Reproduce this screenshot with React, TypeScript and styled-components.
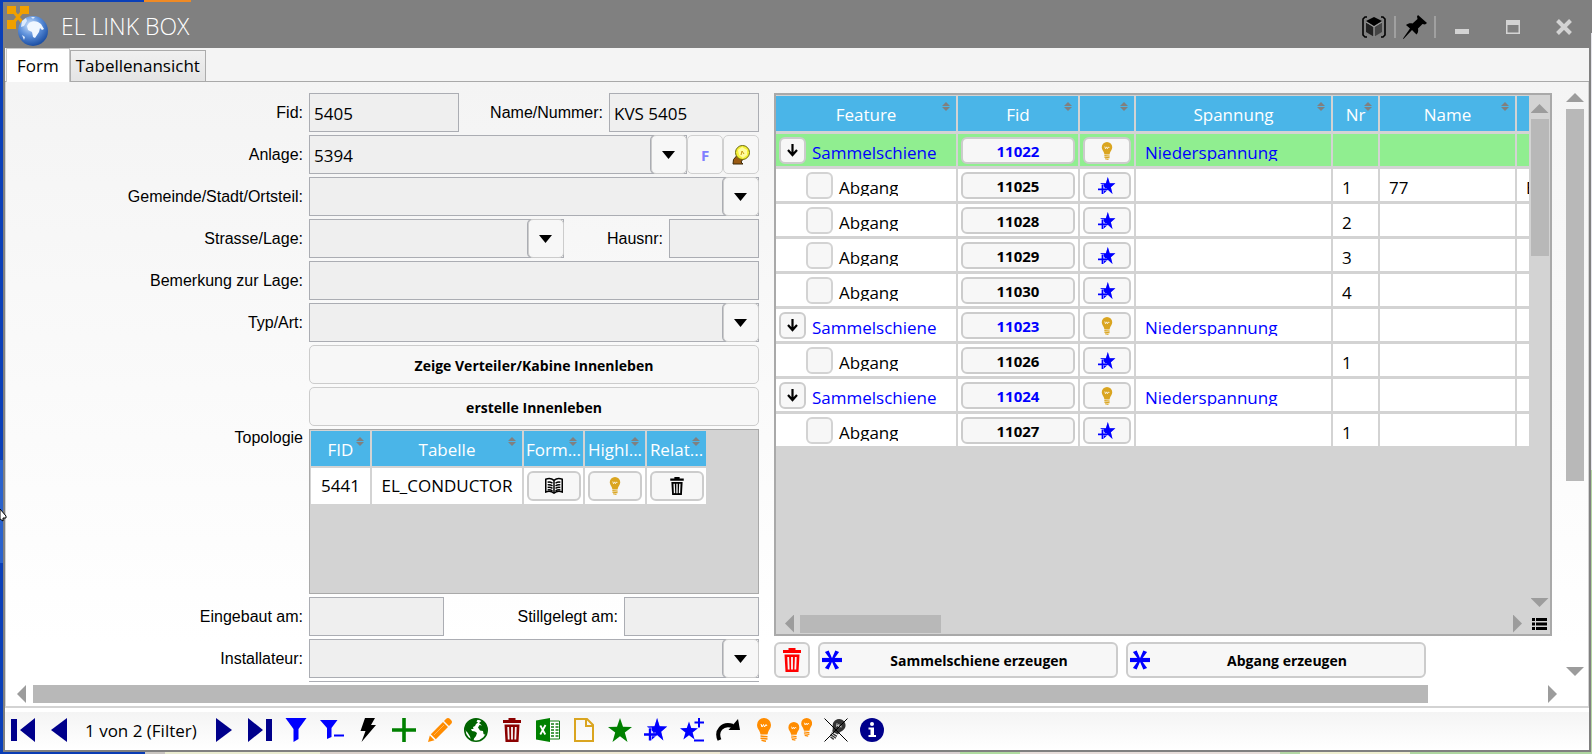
import React from 'react';
import styled, { createGlobalStyle } from 'styled-components';

const UI_FONT = '"Open Sans", "Noto Sans", sans-serif';
const LABEL_FONT = '"Liberation Sans", Arial, sans-serif';

const GlobalStyle = createGlobalStyle`
  *, *::before, *::after { box-sizing: border-box; }
  body { margin: 0; font-family: ${UI_FONT}; font-size: 17px; color: #000; }
  button, input, select { font: inherit; color: inherit; margin: 0; }
  button { padding: 0; cursor: pointer; }
`;

/* ---------- desktop and window ---------- */

const Desktop = styled.div`
  position: relative;
  display: flex;
  height: 100vh;
  min-height: 480px;
  padding: 2px 1px 2px 3px;
  background:
    linear-gradient(90deg, #0a3fb8 0 144px, #f08a24 144px 191px, #808080 191px) top / 100% 2px no-repeat,
    linear-gradient(90deg, #0a3db5 0 145px, #c9c5c0 145px 165px, #e9ebcf 165px 320px, #d9cfc9 320px 560px, #eee8d2 560px 720px, #d8cfd0 720px 960px, #b0dca0 960px 1020px, #e6dcd9 1020px 1280px, #b3d8a4 1280px 1300px, #eeeecf 1300px 1410px, #aed6a0 1410px) bottom / 100% 2px no-repeat,
    linear-gradient(#808080 0 33px, #e4e4ea 33px 470px, #b5d6a4 470px) right / 1px 100% no-repeat,
    linear-gradient(#0a3fb8 0 460px, #2a62cc 460px 563px, #0a3fb8 563px) left / 3px 100% no-repeat;
`;

const Cursor = styled.svg`
  position: absolute;
  left: 0;
  top: 509px;
`;

const Window = styled.main`
  flex: 1;
  min-width: 0;
  display: flex;
  flex-direction: column;
  border: 2px solid #808080;
  background: #fff;
`;

const TitleBar = styled.header`
  flex: none;
  display: flex;
  align-items: center;
  height: 44px;
  background: #808080;
`;

const Title = styled.h1`
  flex: 1;
  margin: 0 0 0 7px;
  color: #fff;
  font-size: 23px;
  font-weight: 300;
  line-height: 44px;
`;

const TitleButton = styled.button<{ $width: number }>`
  display: flex;
  align-items: center;
  justify-content: center;
  width: ${(p) => p.$width}px;
  height: 44px;
  padding-top: 2px;
  border: 0;
  background: none;
`;

const TitleRule = styled.span`
  width: 2px;
  height: 22px;
  margin-top: 2px;
  background: #a0a0a0;
`;

/* ---------- tabs ---------- */

const TabBar = styled.div`
  flex: none;
  display: flex;
  align-items: flex-end;
  height: 34px;
  padding-left: 1px;
  border-bottom: 1px solid #a9a9a9;
  background: #f4f4f4;
`;

const Tab = styled.button<{ $active?: boolean }>`
  height: ${(p) => (p.$active ? 34 : 31)}px;
  margin-bottom: ${(p) => (p.$active ? -1 : 0)}px;
  padding: 0 ${(p) => (p.$active ? 10 : 5)}px;
  border: 1px solid ${(p) => (p.$active ? '#c8c8c8' : '#acacac')};
  border-bottom: 0;
  background: ${(p) => (p.$active ? '#fff' : 'linear-gradient(#f0f0f0, #e4e4e4)')};
  line-height: 24px;
`;

/* ---------- scroll area ---------- */

const FormArea = styled.section`
  flex: 1;
  min-height: 0;
  display: grid;
  grid-template: minmax(0, 1fr) 24px / minmax(0, 1fr) 26px;
  padding: 1px 0 0 1px;
  border: 1px solid #d3d3d3;
  border-width: 0 1px 2px;
  background: linear-gradient(#f4f4f4, #fff 90%);
`;

const Viewport = styled.div`
  display: grid;
  grid-template-columns: 296px minmax(360px, 450px) minmax(0, 1fr);
  grid-template-rows: minmax(0, 1fr);
  column-gap: 6px;
  padding-top: 10px;
  overflow: hidden;
`;

const VScroll = styled.div<{ $top: number; $bottom: number }>`
  display: flex;
  flex-direction: column;
  align-items: center;
  min-height: 0;
  padding: ${(p) => p.$top}px 0 ${(p) => p.$bottom}px;
`;

const HScroll = styled.div<{ $left: number; $right: number }>`
  display: flex;
  align-items: center;
  min-width: 0;
  padding: 0 ${(p) => p.$right}px 0 ${(p) => p.$left}px;
`;

const Track = styled.div<{ $vertical?: boolean; $gap: number }>`
  display: flex;
  flex-direction: ${(p) => (p.$vertical ? 'column' : 'row')};
  flex: 1;
  min-width: 0;
  min-height: 0;
  margin: ${(p) => (p.$vertical ? `${p.$gap}px 0` : `0 ${p.$gap}px`)};
`;

const Thumb = styled.div<{ $share: string }>`
  flex: 0 0 ${(p) => p.$share};
  min-width: 18px;
  min-height: 18px;
  background: #b8b8b8;
`;

const ScrollArrow = styled.button<{ $dir: 'up' | 'down' | 'left' | 'right' }>`
  flex: none;
  width: ${(p) => (p.$dir === 'up' || p.$dir === 'down' ? 18 : 9)}px;
  height: ${(p) => (p.$dir === 'up' || p.$dir === 'down' ? 9 : 18)}px;
  border: 0;
  background: #9c9c9c;
  clip-path: polygon(${(p) =>
    ({
      up: '50% 0, 100% 100%, 0 100%',
      down: '0 0, 100% 0, 50% 100%',
      left: '0 50%, 100% 0, 100% 100%',
      right: '0 0, 100% 50%, 0 100%',
    })[p.$dir]});
`;

/* ---------- form ---------- */

const FormGrid = styled.form`
  grid-column: 1 / 3;
  align-self: start;
  display: grid;
  grid-template-columns: 296px minmax(0, 1fr);
  grid-auto-rows: max-content;
  gap: 3px 6px;
`;

const Label = styled.label<{ $top?: boolean }>`
  align-self: ${(p) => (p.$top ? 'start' : 'center')};
  text-align: right;
  white-space: nowrap;
  font-family: ${LABEL_FONT};
  font-size: 16px;
  line-height: 18px;
`;

const FieldRow = styled.div`
  display: flex;
  grid-column: 2;
  height: 39px;
`;

const Inline = styled.div`
  flex: 1;
  display: flex;
  align-items: center;
  justify-content: flex-end;
  padding-right: 6px;
`;

const TextBox = styled.input<{ $width?: number }>`
  flex: ${(p) => (p.$width ? `0 0 ${p.$width}px` : '1')};
  min-width: 0;
  height: 39px;
  padding: 2px 4px 0;
  border: 1px solid #abadb3;
  border-radius: 0;
  background: #efefef;
  outline-offset: -1px;
`;

const Combo = styled.div<{ $width?: number }>`
  position: relative;
  flex: ${(p) => (p.$width ? `0 0 ${p.$width}px` : '1')};
  min-width: 0;
`;

const Select = styled.select`
  appearance: none;
  width: 100%;
  height: 39px;
  padding: 2px 40px 0 4px;
  border: 1px solid #abadb3;
  border-radius: 0;
  background: #efefef;
`;

const ComboArrow = styled.span`
  position: absolute;
  top: 0;
  right: 0;
  display: flex;
  align-items: center;
  justify-content: center;
  width: 36px;
  height: 39px;
  padding-right: 2px;
  border: 1px solid #ccc;
  border-radius: 5px;
  background: #f7f7f7;
  box-shadow: -1px 0 0 #abadb3;
  pointer-events: none;
`;

const SquareButton = styled.button`
  flex: 0 0 36px;
  display: flex;
  align-items: center;
  justify-content: center;
  height: 39px;
  border: 1px solid #d0d0d0;
  border-radius: 5px;
  background: #f7f7f7;
  color: #8080ff;
  font-size: 15px;
  font-weight: 700;
`;

const WideButton = styled.button`
  grid-column: 2;
  height: 39px;
  padding-top: 1px;
  border: 1px solid #ccc;
  border-radius: 5px;
  background: #f7f7f7;
  font-size: 14px;
  font-weight: 700;
`;

/* ---------- tables ---------- */

const TopologyBox = styled.div`
  grid-column: 2;
  height: 165px;
  padding: 1px;
  border: 1px solid #a9a9a9;
  background: #d3d3d3;
  overflow: hidden;
`;

const Table = styled.table<{ $width: number }>`
  width: ${(p) => p.$width}px;
  table-layout: fixed;
  border-collapse: separate;
  border-spacing: 0;
`;

const Th = styled.th<{ $line: number }>`
  position: relative;
  height: ${(p) => 35 + p.$line}px;
  padding: 2px 0 0;
  border-right: 2px solid #d3d3d3;
  border-bottom: ${(p) => p.$line}px solid #d3d3d3;
  background: #4ab5e8;
  color: #fff;
  font-weight: 400;
  line-height: 24px;
  white-space: nowrap;
`;

const SortMark = styled.svg`
  position: absolute;
  top: 6px;
  right: 6px;
`;

const TopoCell = styled.td`
  height: 36px;
  padding: 0;
  border-right: 2px solid #d3d3d3;
  background: #fff;
  text-align: center;
  line-height: 24px;
`;

const CellButton = styled.button<{ $width: number; $height: number; $tint?: string }>`
  flex: none;
  display: flex;
  align-items: center;
  justify-content: center;
  width: ${(p) => p.$width}px;
  height: ${(p) => p.$height}px;
  margin: 0 auto;
  border: 2px solid #ccc;
  border-radius: 6px;
  background: #f7f7f7;
  color: ${(p) => p.$tint ?? '#000'};
  font-size: 15px;
  font-weight: 700;
  line-height: 20px;
`;

const RightColumn = styled.section`
  display: flex;
  flex-direction: column;
  min-width: 0;
  min-height: 0;
  padding: 0 10px 4px 9px;
`;

const FeatureGrid = styled.div`
  flex: 1;
  min-height: 0;
  display: grid;
  grid-template: minmax(0, 1fr) 21px / minmax(0, 1fr) 21px;
  border: 2px solid #a9a9a9;
  background: #d3d3d3;
`;

const TableClip = styled.div`
  padding-top: 1px;
  overflow: hidden;
`;

const Td = styled.td<{ $selected?: boolean; $tint?: string }>`
  height: 35px;
  padding: 0;
  border-right: 2px solid #d3d3d3;
  border-bottom: 3px solid #d3d3d3;
  background: ${(p) => (p.$selected ? '#90ee90' : '#fff')};
  color: ${(p) => p.$tint ?? '#000'};
  vertical-align: top;
`;

const CellText = styled.div<{ $pad: number; $clip?: boolean }>`
  height: ${(p) => (p.$clip ? 27 : 32)}px;
  padding-left: ${(p) => p.$pad}px;
  line-height: 37px;
  white-space: nowrap;
  overflow: ${(p) => (p.$clip ? 'hidden' : 'visible')};
`;

const CellBody = styled.div<{ $indent?: boolean }>`
  display: flex;
  align-items: flex-start;
  height: 32px;
  padding: 0 3px 0 ${(p) => (p.$indent ? 30 : 3)}px;
`;

const ButtonSlot = styled.div`
  flex: none;
  display: flex;
  padding-top: 3px;
`;

const RowCheck = styled.input`
  appearance: none;
  width: 27px;
  height: 27px;
  border: 2px solid #d3d3d3;
  border-radius: 6px;
  background: #f7f7f7;
`;

const Corner = styled.button`
  display: flex;
  align-items: center;
  justify-content: center;
  border: 0;
  background: none;
`;

const Actions = styled.div`
  flex: none;
  display: flex;
  gap: 8px;
  margin-top: 6px;
`;

const ActionButton = styled.button<{ $wide?: boolean }>`
  display: grid;
  grid-template-columns: ${(p) => (p.$wide ? '22px 1fr' : '1fr')};
  align-items: center;
  justify-items: center;
  flex: 0 1 ${(p) => (p.$wide ? 300 : 36)}px;
  height: 36px;
  padding: 0 1px;
  border: 2px solid #ccc;
  border-radius: 6px;
  background: #f7f7f7;
  font-size: 14px;
  font-weight: 700;
`;

/* ---------- bottom toolbar ---------- */

const Toolbar = styled.footer`
  flex: none;
  display: flex;
  align-items: center;
  height: 42px;
  padding-bottom: 2px;
  border-top: 4px solid #fff;
  background: linear-gradient(#f4f4f4, #fff);
`;

const ToolButton = styled.button`
  flex: none;
  display: flex;
  align-items: center;
  justify-content: center;
  width: 36px;
  height: 36px;
  border: 0;
  background: none;
`;

const Position = styled.output`
  flex: 0 0 129px;
  padding-left: 8px;
  white-space: nowrap;
`;

/* ---------- icons ---------- */

const Svg = ({ size = 24, children }: { size?: number; children: React.ReactNode }) => (
  <svg width={size} height={size} viewBox="0 0 24 24" aria-hidden="true">
    {children}
  </svg>
);

const BulbShape = ({ color, gap = '#fff' }: { color: string; gap?: string }) => (
  <g>
    <path d="M12 0a7 7 0 0 0-7 7c0 3.200 2.200 4.800 3 7.400.300 1 .300 1.600.600 2.100h6.800c.300-.500.300-1.100.600-2.100.800-2.600 3-4.200 3-7.400a7 7 0 0 0-7-7z" fill={color} />
    <path d="M9 6l1 3 1.500-2.500L12.500 9 14 6.500l1 1.500" fill="none" stroke={gap} strokeWidth="1" />
    <path d="M8.500 18l7 .8M8.500 20.200l7 .8M9.500 22.300l4.500.9" stroke={color} strokeWidth="1.500" />
  </g>
);

const Bulb = ({ color, size = 24 }: { color: string; size?: number }) => (
  <Svg size={size}>
    <BulbShape color={color} />
  </Svg>
);

const TwoBulbs = () => (
  <Svg>
    <g transform="translate(-3.500 4) scale(.78)"><BulbShape color="#ff8c00" /></g>
    <g transform="translate(9.300 0) scale(.78)"><BulbShape color="#ff8c00" /></g>
  </Svg>
);

const BulbOff = () => (
  <Svg>
    <g transform="rotate(28 12 12) translate(1.500 0) scale(.92)"><BulbShape color="#333" gap="#ccc" /></g>
    <path d="M.5.5l23 23M23.500.5l-23 23" stroke="#000" strokeWidth="1" />
  </Svg>
);

const Trash = ({ color, size = 24 }: { color: string; size?: number }) => (
  <Svg size={size}>
    <path d="M8.500 0h7v2h5.500v3H3V2h5.500z M4.500 6.500h15L18.500 24h-13z" fill={color} />
    <path d="M8.200 9l.5 12.500M12 9v12.500M15.800 9l-.5 12.500" stroke="#f7f7f7" strokeWidth="1.800" />
  </Svg>
);

const STAR = 'M12 0l3 8.800 9 .2-7.200 5.500L19.500 24 12 18.200 4.500 24l2.700-9.500L0 9l9-.2z';

const Star = () => (
  <Svg><path d={STAR} fill="#008000" /></Svg>
);

const StarPlus = ({ size = 24 }: { size?: number }) => (
  <Svg size={size}>
    <path d={STAR} fill="#00f" transform="translate(3 0) scale(.84 .94)" />
    <path d="M6 9.500v13M0 16.500h12" stroke="#fff" strokeWidth="4" />
    <path d={STAR} fill="#00f" transform="translate(3 0) scale(.84 .94)" opacity=".45" />
    <path d="M6 10.500v12M0 16.500h12" stroke="#00f" strokeWidth="2.400" />
  </Svg>
);

const StarPlusMinus = () => (
  <Svg>
    <path d={STAR} fill="#00f" transform="translate(0 3.500) scale(.75)" />
    <path d="M19 0v9.500M14.500 4.500h9.500M14 22.500h10" stroke="#00f" strokeWidth="2" />
  </Svg>
);

const Book = () => (
  <Svg size={18}>
    <path d="M1 3c4-1.500 8-1 11 1.500C15 2 19 1.500 23 3v17c-4-1.500-8-.8-11 1.500C9 19.200 5 18.500 1 20z" fill="#fff" stroke="#000" strokeWidth="2" />
    <path d="M12 5v16M3.500 7c2.500-.6 4.500 0 6.500 1.200M3.500 10.500c2.500-.6 4.500 0 6.500 1.200M3.500 14c2.500-.6 4.500 0 6.500 1.200M3.500 17.200c2.500-.6 4.500 0 6.500 1.200M20.500 7c-2.500-.6-4.500 0-6.500 1.200M20.500 10.500c-2.500-.6-4.500 0-6.500 1.200M20.500 14c-2.500-.6-4.500 0-6.500 1.200M20.500 17.200c-2.500-.6-4.500 0-6.500 1.200" fill="none" stroke="#000" strokeWidth="2" />
  </Svg>
);

const Asterisk = () => (
  <Svg size={20}>
    <path d="M0 9.500h24v5H0z" fill="#00f" />
    <path d="M10.500 12L3.500 2.500 8 .5 12 10 16 .5l4.500 2L13.500 12l7 9.500-4.500 2L12 14 8 23.500l-4.500-2z" fill="#00f" />
  </Svg>
);

const DownArrow = () => (
  <svg width="11" height="13" viewBox="0 0 11 13" aria-hidden="true">
    <path d="M5.500 0v11M1 6l4.500 5L10 6" fill="none" stroke="#000" strokeWidth="2.200" />
  </svg>
);

const Caret = () => (
  <svg width="13" height="8" viewBox="0 0 13 8" aria-hidden="true"><path d="M0 0h13L6.500 8z" /></svg>
);

const GoldBulb = () => (
  <svg width="20" height="20" viewBox="0 0 20 20" aria-hidden="true">
    <path d="M8 12l4 2-2 3 2 2H2l.5-4.500L5.500 11z" fill="#9a5a12" stroke="#3c2806" strokeWidth="1" />
    <circle cx="11.500" cy="7.500" r="7" fill="#f6f238" stroke="#6b680c" strokeWidth="1" />
    <path d="M7 5l4-3 5 3 0 5-4 3-4-3z" fill="#fffca0" />
    <path d="M10 10l1-4 2 3" fill="none" stroke="#c89a10" strokeWidth="1" />
  </svg>
);

const AppLogo = () => (
  <svg width="49" height="44" viewBox="0 0 49 44" aria-hidden="true">
    <defs>
      <radialGradient id="globe" cx=".4" cy=".3" r=".7">
        <stop offset="0" stopColor="#cfe3fb" />
        <stop offset=".5" stopColor="#5f92dc" />
        <stop offset="1" stopColor="#1c4fa4" />
      </radialGradient>
    </defs>
    <path d="M2 2h9v8H2z M15 2h9v8h-9z M2 16h9v9H2z M15 16h9v9h-9z" fill="#f0a000" />
    <path d="M9 8l8 10M17 8L9 18" stroke="#f0a000" strokeWidth="3" />
    <circle cx="28" cy="27" r="15" fill="url(#globe)" />
    <path d="M24 19c4-3 9-2 12 1l3 5-2 1-2-2-1 4-4 6-2-1-1-5-4-2-1-4z" fill="#f0f7ff" />
    <path d="M17 17l4-3 1 3-3 5-3 1z M17 31l3 2-1 3z M26 13l4 0-2 2z" fill="#dceafc" />
  </svg>
);

const CubeIcon = () => (
  <svg width="24" height="22" viewBox="0 0 24 22" aria-hidden="true">
    <path d="M5 1H3L1 3v16l2 2h2M19 1h2l2 2v16l-2 2h-2" fill="none" stroke="#000" strokeWidth="1.600" />
    <path d="M12 1l8 4-8 5-8-5z" fill="#000" />
    <path d="M4 6.500l7.500 4.500v9.500L4 16z" fill="#222" />
    <path d="M20 6.500L12.500 11v9.500L20 16z" fill="#444" />
    <path d="M4 6l8 4.800L20 6M12 11v10" fill="none" stroke="#999" strokeWidth="1" />
  </svg>
);

const PinIcon = () => (
  <svg width="24" height="24" viewBox="0 0 24 24" aria-hidden="true">
    <path d="M15 0l9 8-2 1.500-2.500-.5-4.500 4.500c.5 2.500 0 4.500-1.500 6L9 15 .5 24 0 23.500 7 13.500 3 10c2-1.500 4-2 6.500-1.500L14.500 4 14 1.500z" />
  </svg>
);

const Polygon = ({ d, color }: { d: string; color: string }) => (
  <Svg><path d={d} fill={color} /></Svg>
);

const Globe = () => (
  <Svg>
    <circle cx="12" cy="12" r="11.200" fill="#fff" stroke="#006400" strokeWidth="1.600" />
    <path d="M5 3.500C8 1 11 .5 14 1l-1.500 2.500 1.500 1L12 6l-1 2-2 1 .5 2-2.500 0 1 2 3 .5 2 1.500-1 3-2 2.500-.5 2.500-2.500-.500-1-4-2.500-4L1 12C1 8.500 2.500 5.500 5 3.500z M15 5l3-2.500c3 1.500 5 5 5 9.500l-1.500 5-2-1-.5-3-3-.5-2-3 1.500-2.500 2.500.500z" fill="#006400" />
  </Svg>
);

const Excel = () => (
  <Svg>
    <path d="M13 3h10.500v18H13" fill="#fff" stroke="#107c10" strokeWidth="1" />
    <path d="M15 6h3M19.500 6h3M15 9h3M19.500 9h3M15 12h3M19.500 12h3M15 15h3M19.500 15h3M15 18h3M19.500 18h3" stroke="#107c10" strokeWidth="1.500" />
    <path d="M0 2.500L14 0v24L0 21.500z" fill="#008000" />
    <path d="M4.300 7.500l5 9M9.500 7l-5.200 9.500" stroke="#fff" strokeWidth="1.800" />
  </Svg>
);

const Pencil = () => (
  <Svg>
    <path d="M0 24l1.800-6.500 4.700 4.700z M2.800 16.200L15 4l5 5L7.800 21.200z M16 3l2.200-2.200c1-1 2.600-1 3.600 0l1.400 1.400c1 1 1 2.600 0 3.600L21 8z" fill="#ff8c00" />
    <path d="M6 17L16 7" stroke="#ffb45c" strokeWidth="1" />
  </Svg>
);

const Page = () => (
  <Svg>
    <path d="M3 1h12l6 6v16H3z M14 1v7h7" fill="none" stroke="#daa520" strokeWidth="2" />
  </Svg>
);

const Redo = () => (
  <Svg>
    <path d="M3.500 22C-.5 13 6 4.500 17 8" fill="none" stroke="#000" strokeWidth="4" />
    <path d="M22 1l2 11-11.500 0z" />
  </Svg>
);

const Info = () => (
  <Svg>
    <circle cx="12" cy="12" r="12" fill="#00008b" />
    <circle cx="12" cy="6" r="2" fill="#fff" />
    <path d="M8.500 9.500H14V17h2v2H8.500v-2h2v-5.500h-2z" fill="#fff" />
  </Svg>
);

const Sort = () => (
  <SortMark width="8" height="9" viewBox="0 0 8 9" aria-hidden="true">
    <path d="M4 0l4 4H0z M0 5h8L4 9z" fill="#808080" />
  </SortMark>
);

/* ---------- data ---------- */

type Row = { kind: 'rail' | 'branch'; fid: string; nr?: string; name?: string; more?: string };

const ROWS: Row[] = [
  { kind: 'rail', fid: '11022' },
  { kind: 'branch', fid: '11025', nr: '1', name: '77', more: 'E' },
  { kind: 'branch', fid: '11028', nr: '2' },
  { kind: 'branch', fid: '11029', nr: '3' },
  { kind: 'branch', fid: '11030', nr: '4' },
  { kind: 'rail', fid: '11023' },
  { kind: 'branch', fid: '11026', nr: '1' },
  { kind: 'rail', fid: '11024' },
  { kind: 'branch', fid: '11027', nr: '1' },
];

const COLUMNS: [string, number][] = [
  ['Feature', 182],
  ['Fid', 122],
  ['', 56],
  ['Spannung', 197],
  ['Nr', 47],
  ['Name', 137],
  ['', 137],
];

const TOPO_COLUMNS: [string, number][] = [
  ['FID', 61],
  ['Tabelle', 152],
  ['Form...', 61],
  ['Highl...', 62],
  ['Relat...', 61],
];

const TOOLS: [string, React.ReactNode][] = [
  ['Nächster', <Polygon d="M4 0l16 12L4 24z" color="#00008b" />],
  ['Letzter', <Polygon d="M0 0l15 12L0 24z M18 1h6v22h-6z" color="#00008b" />],
  ['Filter', <Polygon d="M1.500 0h21L14.500 11v10L9.500 24V11z" color="#00f" />],
  ['Filter entfernen', <Polygon d="M0 2h17.500L11.500 10v9L7 21V10z M14 16.500h10v2H14z" color="#00f" />],
  ['Ausführen', <Polygon d="M9 0h10l-4 7h5L5.500 24 9.500 13H4.500z" color="#000" />],
  ['Neu', <Polygon d="M10.200 0h3.600v10.200H24v3.600H13.800V24h-3.600V13.800H0v-3.600h10.200z" color="#008000" />],
  ['Bearbeiten', <Pencil />],
  ['Karte', <Globe />],
  ['Löschen', <Trash color="#8b0000" />],
  ['Excel', <Excel />],
  ['Bericht', <Page />],
  ['Favorit', <Star />],
  ['Auswahl hinzufügen', <StarPlus />],
  ['Auswahl ändern', <StarPlusMinus />],
  ['Weiter', <Redo />],
  ['Hervorheben', <Bulb color="#ff8c00" />],
  ['Alle hervorheben', <TwoBulbs />],
  ['Hervorhebung aus', <BulbOff />],
  ['Info', <Info />],
];

/* ---------- composed parts ---------- */

const ComboField = ({ id, value = '', width }: { id: string; value?: string; width?: number }) => (
  <Combo $width={width}>
    <Select id={id} defaultValue={value}>
      <option value={value}>{value}</option>
    </Select>
    <ComboArrow><Caret /></ComboArrow>
  </Combo>
);

const HeaderRow = ({ columns, line }: { columns: [string, number][]; line: number }) => (
  <thead>
    <tr>
      {columns.map(([text], i) => (
        <Th key={i} $line={line}>
          {text}
          <Sort />
        </Th>
      ))}
    </tr>
  </thead>
);

const Cols = ({ columns }: { columns: [string, number][] }) => (
  <colgroup>
    {columns.map(([, width], i) => (
      <col key={i} width={width} />
    ))}
  </colgroup>
);

const FeatureRow = ({ row, selected }: { row: Row; selected: boolean }) => {
  const rail = row.kind === 'rail';
  const tint = rail ? '#0000ff' : '#000';
  const cell = { $selected: selected, $tint: tint };
  return (
    <tr>
      <Td {...cell}>
        <CellBody $indent={!rail}>
          <ButtonSlot>
            {rail ? (
              <CellButton type="button" aria-label="Zuklappen" $width={27} $height={27}><DownArrow /></CellButton>
            ) : (
              <RowCheck type="checkbox" aria-label={row.fid} />
            )}
          </ButtonSlot>
          <CellText $pad={6} $clip>{rail ? 'Sammelschiene' : 'Abgang'}</CellText>
        </CellBody>
      </Td>
      <Td {...cell}>
        <ButtonSlot>
          <CellButton type="button" $width={114} $height={27} $tint={tint}>{row.fid}</CellButton>
        </ButtonSlot>
      </Td>
      <Td {...cell}>
        <ButtonSlot>
          <CellButton type="button" aria-label="Markieren" $width={48} $height={27}>
            {rail ? <Bulb color="#daa520" size={18} /> : <StarPlus size={18} />}
          </CellButton>
        </ButtonSlot>
      </Td>
      <Td {...cell}><CellText $pad={9} $clip>{rail ? 'Niederspannung' : ''}</CellText></Td>
      <Td {...cell}><CellText $pad={9}>{row.nr}</CellText></Td>
      <Td {...cell}><CellText $pad={9}>{row.name}</CellText></Td>
      <Td {...cell}><CellText $pad={9}>{row.more}</CellText></Td>
    </tr>
  );
};

const LinkBoxForm = () => (
  <FormGrid onSubmit={(e) => e.preventDefault()}>
    <Label htmlFor="fid">Fid:</Label>
    <FieldRow>
      <TextBox id="fid" $width={150} defaultValue="5405" />
      <Inline><Label htmlFor="name">Name/Nummer:</Label></Inline>
      <TextBox id="name" $width={150} defaultValue="KVS 5405" />
    </FieldRow>

    <Label htmlFor="anlage">Anlage:</Label>
    <FieldRow>
      <ComboField id="anlage" value="5394" />
      <SquareButton type="button">F</SquareButton>
      <SquareButton type="button" aria-label="Hervorheben"><GoldBulb /></SquareButton>
    </FieldRow>

    <Label htmlFor="gemeinde">Gemeinde/Stadt/Ortsteil:</Label>
    <FieldRow><ComboField id="gemeinde" /></FieldRow>

    <Label htmlFor="strasse">Strasse/Lage:</Label>
    <FieldRow>
      <ComboField id="strasse" width={255} />
      <Inline><Label htmlFor="hausnr">Hausnr:</Label></Inline>
      <TextBox id="hausnr" $width={90} />
    </FieldRow>

    <Label htmlFor="bemerkung">Bemerkung zur Lage:</Label>
    <FieldRow><TextBox id="bemerkung" /></FieldRow>

    <Label htmlFor="typ">Typ/Art:</Label>
    <FieldRow><ComboField id="typ" /></FieldRow>

    <WideButton type="button">Zeige Verteiler/Kabine Innenleben</WideButton>
    <WideButton type="button">erstelle Innenleben</WideButton>

    <Label as="span" $top>Topologie</Label>
    <TopologyBox>
      <Table $width={397}>
        <Cols columns={TOPO_COLUMNS} />
        <HeaderRow columns={TOPO_COLUMNS} line={2} />
        <tbody>
          <tr>
            <TopoCell>5441</TopoCell>
            <TopoCell>EL_CONDUCTOR</TopoCell>
            <TopoCell><CellButton type="button" aria-label="Formular" $width={54} $height={30}><Book /></CellButton></TopoCell>
            <TopoCell><CellButton type="button" aria-label="Hervorheben" $width={54} $height={30}><Bulb color="#daa520" size={18} /></CellButton></TopoCell>
            <TopoCell><CellButton type="button" aria-label="Löschen" $width={54} $height={30}><Trash color="#000" size={18} /></CellButton></TopoCell>
          </tr>
        </tbody>
      </Table>
    </TopologyBox>

    <Label htmlFor="eingebaut">Eingebaut am:</Label>
    <FieldRow>
      <TextBox id="eingebaut" $width={135} />
      <Inline><Label htmlFor="stillgelegt">Stillgelegt am:</Label></Inline>
      <TextBox id="stillgelegt" $width={135} />
    </FieldRow>

    <Label htmlFor="installateur">Installateur:</Label>
    <FieldRow><ComboField id="installateur" /></FieldRow>

    <FieldRow><TextBox aria-label="Hersteller" /></FieldRow>
  </FormGrid>
);

export default function App() {
  return (
    <Desktop>
      <GlobalStyle />
      <Window>
        <TitleBar>
          <AppLogo />
          <Title>EL LINK BOX</Title>
          <TitleButton $width={40} aria-label="3D"><CubeIcon /></TitleButton>
          <TitleRule />
          <TitleButton $width={38} aria-label="Anheften"><PinIcon /></TitleButton>
          <TitleRule />
          <TitleButton $width={51} aria-label="Minimieren">
            <svg width="14" height="16" viewBox="0 0 14 16"><path d="M0 10h14v5H0z" fill="#d3d3d3" /></svg>
          </TitleButton>
          <TitleButton $width={51} aria-label="Maximieren">
            <svg width="14" height="14" viewBox="0 0 14 14"><path d="M0 0h14v14H0z M1.500 5v7.500h11V5z" fill="#d3d3d3" fillRule="evenodd" /></svg>
          </TitleButton>
          <TitleButton $width={51} aria-label="Schliessen">
            <svg width="16" height="16" viewBox="0 0 16 16"><path d="M1.500 1.500l13 13M14.500 1.500l-13 13" stroke="#d3d3d3" strokeWidth="4" /></svg>
          </TitleButton>
        </TitleBar>

        <TabBar role="tablist">
          <Tab role="tab" aria-selected $active>Form</Tab>
          <Tab role="tab" aria-selected={false}>Tabellenansicht</Tab>
        </TabBar>

        <FormArea>
          <Viewport>
            <LinkBoxForm />
            <RightColumn>
              <FeatureGrid>
                <TableClip>
                  <Table $width={878}>
                    <Cols columns={COLUMNS} />
                    <HeaderRow columns={COLUMNS} line={3} />
                    <tbody>
                      {ROWS.map((row, i) => (
                        <FeatureRow key={row.fid} row={row} selected={i === 0} />
                      ))}
                    </tbody>
                  </Table>
                </TableClip>
                <VScroll $top={9} $bottom={6}>
                  <ScrollArrow $dir="up" aria-label="Nach oben" />
                  <Track $vertical $gap={6}><Thumb $share="29%"><svg width="18" height="1" /></Thumb></Track>
                  <ScrollArrow $dir="down" aria-label="Nach unten" />
                </VScroll>
                <HScroll $left={9} $right={7}>
                  <ScrollArrow $dir="left" aria-label="Nach links" />
                  <Track $gap={6}><Thumb $share="20%" /></Track>
                  <ScrollArrow $dir="right" aria-label="Nach rechts" />
                </HScroll>
                <Corner aria-label="Spalten">
                  <svg width="15" height="12" viewBox="0 0 15 12">
                    <path d="M0 0h3v3H0z M4 0h11v3H4z M0 4.500h3v3H0z M4 4.500h11v3H4z M0 9h3v3H0z M4 9h11v3H4z" />
                  </svg>
                </Corner>
              </FeatureGrid>
              <Actions>
                <ActionButton aria-label="Löschen"><Trash color="#f00" /></ActionButton>
                <ActionButton $wide><Asterisk /><span>Sammelschiene erzeugen</span></ActionButton>
                <ActionButton $wide><Asterisk /><span>Abgang erzeugen</span></ActionButton>
              </Actions>
            </RightColumn>
          </Viewport>
          <VScroll $top={10} $bottom={6}>
            <ScrollArrow $dir="up" aria-label="Nach oben" />
            <Track $vertical $gap={7}><Thumb $share="67.5%"><svg width="18" height="1" /></Thumb></Track>
            <ScrollArrow $dir="down" aria-label="Nach unten" />
          </VScroll>
          <HScroll $left={10} $right={5}>
            <ScrollArrow $dir="left" aria-label="Nach links" />
            <Track $gap={7}><Thumb $share="92.5%" /></Track>
            <ScrollArrow $dir="right" aria-label="Nach rechts" />
          </HScroll>
        </FormArea>

        <Toolbar>
          <ToolButton aria-label="Erster"><Polygon d="M0 1h6v22H0z M24 0v24L9 12z" color="#00008b" /></ToolButton>
          <ToolButton aria-label="Vorheriger"><Polygon d="M20 0v24L4 12z" color="#00008b" /></ToolButton>
          <Position>1 von 2 (Filter)</Position>
          {TOOLS.map(([name, icon]) => (
            <ToolButton key={name} aria-label={name}>{icon}</ToolButton>
          ))}
        </Toolbar>
      </Window>
      <Cursor width="7" height="18" viewBox="0 0 7 18" aria-hidden="true">
        <path d="M0 0l6 7v2H3v3l-3-2z" fill="#fff" stroke="#000" strokeWidth="1" />
      </Cursor>
    </Desktop>
  );
}
